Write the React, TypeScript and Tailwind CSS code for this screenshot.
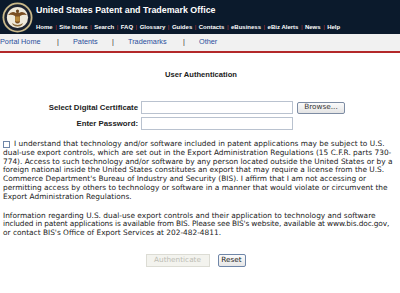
import React from "react";

const navTop = ["Home", "Site Index", "Search", "FAQ", "Glossary", "Guides", "Contacts", "eBusiness", "eBiz Alerts", "News", "Help"];

function Seal() {
  return (
    <svg width="31" height="31" viewBox="0 0 31 31">
      <circle cx="15.5" cy="15.5" r="15" fill="#c9b98a" />
      <circle cx="15.5" cy="15.5" r="13.2" fill="#1c2230" />
      <circle cx="15.5" cy="15.5" r="10.6" fill="#efe9da" />
      <path d="M6 13 Q10 8 14 11 L15.5 9 L17 11 Q21 8 25 13 Q21 12 18 14 L18 20 Q15.5 23 13 20 L13 14 Q10 12 6 13 Z" fill="#7a4e22" />
      <circle cx="15.5" cy="9" r="1.6" fill="#6b4520" />
      <rect x="13.2" y="14.5" width="4.6" height="5" fill="#b8893d" />
      <path d="M10 21 Q15.5 25 21 21 L20 23 Q15.5 26 11 23 Z" fill="#8a6a3a" />
    </svg>
  );
}

export default function App() {
  const para = "whitespace-nowrap";
  return (
    <div className="w-[400px] h-[293px] bg-white overflow-hidden">
      {/* header */}
      <div className="h-[34px] bg-[#0b1a2c] flex items-center pl-[2px]">
        <Seal />
        <div className="ml-[3px] flex flex-col">
          <div className="text-white font-bold text-[8.9px] leading-[11px] font-['Liberation_Sans',Arial,sans-serif] whitespace-nowrap mt-[1px]">
            United States Patent and Trademark Office
          </div>
          <div className="mt-[7px] flex items-center whitespace-nowrap text-[6px] leading-[8px] font-bold text-white font-['Liberation_Sans',Arial,sans-serif]">
            {navTop.map((n, i) => (
              <React.Fragment key={n}>
                {i > 0 && <span className="text-[#c8352f] mx-[2.5px] font-normal">|</span>}
                <span>{n}</span>
              </React.Fragment>
            ))}
          </div>
        </div>
      </div>
      {/* sub nav */}
      <div className="h-[19px] bg-[#f1f1f1] flex items-center text-[7.3px] text-[#2a4f9c] font-['Liberation_Sans',Arial,sans-serif] border-b-2 border-[#b3282a] whitespace-nowrap">
        <span className="w-[57px]">Portal Home</span>
        <span className="w-[16px] text-[#333]">|</span>
        <span className="w-[39px]">Patents</span>
        <span className="w-[16px] text-[#333]">|</span>
        <span className="w-[55px]">Trademarks</span>
        <span className="w-[16px] text-[#333]">|</span>
        <span>Other</span>
      </div>
      {/* title */}
      <div className="mt-[17px] text-center text-[7.6px] font-bold text-[#222] font-['Liberation_Sans',Arial,sans-serif] leading-[9px] pl-[2px]">
        User Authentication
      </div>
      {/* form */}
      <div className="mt-[22px] flex flex-col gap-[3px] font-['Liberation_Sans',Arial,sans-serif]">
        <div className="flex items-center">
          <div className="w-[138px] text-right text-[7.8px] font-bold text-[#222] whitespace-nowrap">Select Digital Certificate</div>
          <div className="ml-[3px] w-[152px] h-[13px] border border-[#b9c2cf] bg-white" />
          <div className="ml-[4px] w-[48px] h-[12px] border border-[#7d8ca3] rounded-[2px] bg-gradient-to-b from-[#fbfbfb] to-[#e4e4e4] flex items-center justify-center text-[7.3px] text-[#333] font-['DejaVu_Sans',Verdana,sans-serif]">
            Browse...
          </div>
        </div>
        <div className="flex items-center">
          <div className="w-[138px] text-right text-[7.8px] font-bold text-[#222] whitespace-nowrap">Enter Password:</div>
          <div className="ml-[3px] w-[152px] h-[13px] border border-[#b9c2cf] bg-white" />
        </div>
      </div>
      {/* paragraphs */}
      <div className="mt-[10px] pl-[3px] text-[7.4px] leading-[8.8px] text-[#222] font-['DejaVu_Sans',Verdana,sans-serif]">
        <div className={para + " flex items-center"}>
          <span className="inline-block w-[7px] h-[7px] border border-[#6f86a8] bg-white mr-[4px]" />
          I understand that technology and/or software included in patent applications may be subject to U.S.
        </div>
        <div className={para}>dual-use export controls, which are set out in the Export Administration Regulations (15 C.F.R. parts 730-</div>
        <div className={para}>774). Access to such technology and/or software by any person located outside the United States or by a</div>
        <div className={para}>foreign national inside the United States constitutes an export that may require a license from the U.S.</div>
        <div className={para}>Commerce Department's Bureau of Industry and Security (BIS). I affirm that I am not accessing or</div>
        <div className={para}>permitting access by others to technology or software in a manner that would violate or circumvent the</div>
        <div className={para}>Export Administration Regulations.</div>
        <div className="h-[10px]" />
        <div className={para}>Information regarding U.S. dual-use export controls and their application to technology and software</div>
        <div className={para + " tracking-[-0.14px]"}>included in patent applications is available from BIS. Please see BIS's website, available at www.bis.doc.gov,</div>
        <div className={para}>or contact BIS's Office of Export Services at 202-482-4811.</div>
      </div>
      {/* buttons */}
      <div className="mt-[16px] flex justify-center gap-[8px] font-['DejaVu_Sans',Verdana,sans-serif] text-[7.3px]">
        <div className="w-[64px] h-[13px] border border-[#dcdcd4] bg-[#f3f3ee] text-[#bdbdb5] flex items-center justify-center ml-[-9px]">
          Authenticate
        </div>
        <div className="w-[28px] h-[13px] border border-[#6f86a8] rounded-[2px] bg-gradient-to-b from-[#fbfbfb] to-[#e6e6e6] text-[#222] flex items-center justify-center">
          Reset
        </div>
      </div>
    </div>
  );
}
